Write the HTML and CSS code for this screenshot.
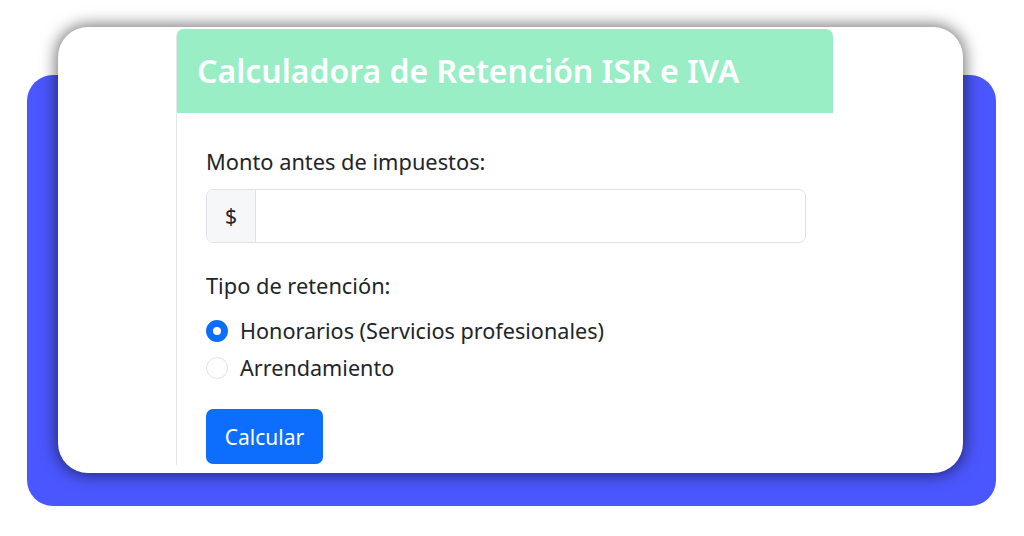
FILE: index.html
```html
<!DOCTYPE html>
<html lang="es">
<head>
<meta charset="utf-8">
<title>Calculadora de Retención ISR e IVA</title>
<link rel="stylesheet" href="styles.css">
</head>
<body>
<div class="scene">
  <div class="backdrop"></div>
  <div class="frame">
    <div class="panel">
      <div class="panel-header">
        <h3 class="title">Calculadora de Retención ISR e IVA</h3>
      </div>
      <div class="panel-body">
        <label class="field-label">Monto antes de impuestos:</label>
        <div class="input-group">
          <span class="addon">$</span>
          <span class="input"></span>
        </div>
        <div class="field-label tipo">Tipo de retención:</div>
        <div class="radio-row first">
          <span class="radio checked"></span>
          <span class="radio-text">Honorarios (Servicios profesionales)</span>
        </div>
        <div class="radio-row">
          <span class="radio"></span>
          <span class="radio-text">Arrendamiento</span>
        </div>
        <button class="btn">Calcular</button>
      </div>
    </div>
  </div>
</div>
</body>
</html>
```
FILE: styles.css
```css
html, body {
  margin: 0;
  padding: 0;
  background: #ffffff;
}
.scene {
  width: 1024px;
  height: 536px;
  display: grid;
  grid-template: 1fr / 1fr;
  overflow: hidden;
  font-family: "Noto Sans", "Open Sans", sans-serif;
  color: #212529;
}
.backdrop {
  grid-area: 1 / 1;
  margin: 75px 28px 30px 27px;
  background: #4b57fe;
  border-radius: 26px;
}
.frame {
  grid-area: 1 / 1;
  margin: 27px 61px 63px 58px;
  background: #ffffff;
  border-radius: 30px;
  box-shadow: 0 0 16px 2px rgba(0, 0, 0, 0.55);
  padding: 2px 0 0 118px;
  box-sizing: border-box;
}
.panel {
  width: 657px;
  height: 436px;
  overflow: hidden;
  border-left: 1px solid #e6e7e9;
  border-radius: 7px 7px 0 0;
  box-sizing: border-box;
}
.panel-header {
  height: 84px;
  background: #99eec6;
  display: flex;
  align-items: center;
  padding-left: 20px;
}
.title {
  margin: 0;
  color: #ffffff;
  font-size: 32px;
  font-weight: 600;
  line-height: 1;
}
.panel-body {
  padding: 35px 0 0 29px;
  display: flex;
  flex-direction: column;
  align-items: flex-start;
}
.field-label {
  font-size: 21.8px;
  line-height: 28px;
}
.input-group {
  margin-top: 13px;
  width: 600px;
  height: 54px;
  display: flex;
  border: 1px solid #dee2e6;
  border-radius: 7px;
  box-sizing: border-box;
  overflow: hidden;
}
.addon {
  width: 48px;
  background: #f6f7f9;
  border-right: 1px solid #dee2e6;
  display: flex;
  align-items: center;
  justify-content: center;
  font-size: 21px;
}
.input {
  flex: 1;
}
.tipo {
  margin-top: 29px;
}
.radio-row {
  display: flex;
  align-items: center;
  gap: 12px;
  height: 37px;
}
.radio-row.first {
  margin-top: 12px;
}
.radio {
  width: 22px;
  height: 22px;
  border-radius: 50%;
  border: 1px solid #dfe2e6;
  box-sizing: border-box;
  background: #ffffff;
}
.radio.checked {
  border: 7px solid #0d6efd;
  background: #ffffff;
}
.radio-text {
  font-size: 21.6px;
}
.btn {
  margin-top: 23px;
  width: 117px;
  height: 55px;
  background: #0d6efd;
  color: #ffffff;
  border: none;
  border-radius: 7px;
  font-family: inherit;
  font-size: 21px;
  padding: 0;
}
```
